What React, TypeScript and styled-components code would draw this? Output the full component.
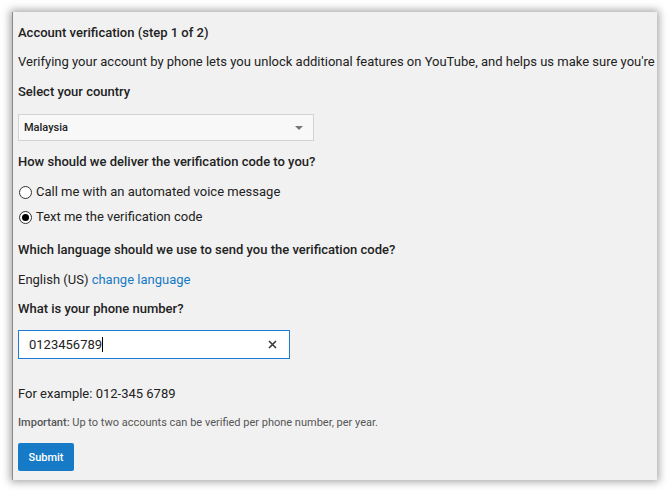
import React from "react";
import styled, { createGlobalStyle } from "styled-components";

const GlobalStyle = createGlobalStyle`
    html, body {
        margin: 0;
        padding: 0;
        background: #ffffff;
    }
    body {
        font-family: Roboto, "Liberation Sans", Arial, sans-serif;
    }
`;

export default function App() {
    return (
        <>
            <GlobalStyle />
            <Page>
                <Panel>
                    <Heading $mt={11}>Account verification (step 1 of 2)</Heading>
                    <Text $mt={9}>
                        Verifying your account by phone lets you unlock additional
                        features on YouTube, and helps us make sure you're a real
                        person.
                    </Text>
                    <Heading $mt={10}>Select your country</Heading>
                    <Select>
                        <span>Malaysia</span>
                        <Arrow />
                    </Select>
                    <Heading $mt={11}>
                        How should we deliver the verification code to you?
                    </Heading>
                    <RadioRow $mt={10}>
                        <Radio />
                        Call me with an automated voice message
                    </RadioRow>
                    <RadioRow $mt={5}>
                        <Radio $checked />
                        Text me the verification code
                    </RadioRow>
                    <Heading $mt={13}>
                        Which language should we use to send you the verification
                        code?
                    </Heading>
                    <Text $mt={10}>
                        English (US) <Link>change language</Link>
                    </Text>
                    <Heading $mt={9}>What is your phone number?</Heading>
                    <PhoneInput>
                        <span>0123456789</span>
                        <Caret />
                        <ClearButton>
                            <svg width="9" height="9" viewBox="0 0 9 9">
                                <path
                                    d="M1 1 L8 8 M8 1 L1 8"
                                    stroke="#3a3a3a"
                                    strokeWidth="1.6"
                                />
                            </svg>
                        </ClearButton>
                    </PhoneInput>
                    <Text $mt={25}>For example: 012-345 6789</Text>
                    <Note>
                        <b>Important:</b> Up to two accounts can be verified per
                        phone number, per year.
                    </Note>
                    <SubmitButton>Submit</SubmitButton>
                </Panel>
            </Page>
        </>
    );
}

const Page = styled.div`
    width: 669px;
    height: 491px;
    padding: 12px 12px 11px 12px;
    box-sizing: border-box;
    background: #ffffff;
`;

const Panel = styled.div`
    width: 645px;
    height: 468px;
    box-sizing: border-box;
    padding: 0 0 0 5px;
    background: #f1f1f1;
    border-left: 1px solid #8a8a8a;
    box-shadow: 0 0 8px 2px rgba(0, 0, 0, 0.35);
    overflow: hidden;
    display: flex;
    flex-direction: column;
    align-items: flex-start;
    color: #222;
`;

const Heading = styled.div<{ $mt: number }>`
    margin-top: ${({ $mt }) => $mt}px;
    font-size: 13px;
    font-weight: 500;
    line-height: 20px;
    color: #222;
    white-space: nowrap;
`;

const Text = styled.div<{ $mt: number }>`
    margin-top: ${({ $mt }) => $mt}px;
    font-size: 13px;
    line-height: 20px;
    color: #222;
    white-space: nowrap;
`;

const Link = styled.span`
    color: #167ac6;
`;

const Select = styled.div`
    margin-top: 12px;
    width: 296px;
    height: 27px;
    box-sizing: border-box;
    padding: 0 10px 0 5px;
    background: #f8f8f8;
    border: 1px solid #d3d3d3;
    display: flex;
    align-items: center;
    justify-content: space-between;
    font-size: 11px;
    font-weight: 500;
    color: #222;
`;

const Arrow = styled.span`
    width: 0;
    height: 0;
    border-left: 4px solid transparent;
    border-right: 4px solid transparent;
    border-top: 4px solid #767676;
`;

const RadioRow = styled.div<{ $mt: number }>`
    margin-top: ${({ $mt }) => $mt}px;
    display: flex;
    align-items: center;
    gap: 4px;
    font-size: 13px;
    line-height: 20px;
    color: #222;
    white-space: nowrap;
`;

const Radio = styled.span<{ $checked?: boolean }>`
    width: 13px;
    height: 13px;
    box-sizing: border-box;
    margin-left: 1px;
    border: 1px solid #333;
    border-radius: 50%;
    background: #fff;
    display: flex;
    align-items: center;
    justify-content: center;

    &::after {
        content: "";
        width: 7px;
        height: 7px;
        border-radius: 50%;
        background: ${({ $checked }) => ($checked ? "#000" : "transparent")};
    }
`;

const PhoneInput = styled.div`
    margin-top: 11px;
    width: 272px;
    height: 29px;
    box-sizing: border-box;
    padding: 0 12px 0 10px;
    background: #ffffff;
    border: 1px solid #1c7cd6;
    display: flex;
    align-items: center;
    font-size: 13px;
    color: #222;
`;

const Caret = styled.span`
    width: 1px;
    height: 15px;
    background: #000;
`;

const ClearButton = styled.span`
    margin-left: auto;
    display: flex;
    align-items: center;
`;

const Note = styled.div`
    margin-top: 11px;
    font-size: 11px;
    line-height: 16px;
    color: #555;
    white-space: nowrap;

    b {
        font-weight: 500;
    }
`;

const SubmitButton = styled.button`
    margin-top: 12px;
    width: 56px;
    height: 28px;
    padding: 0;
    border: none;
    border-radius: 2px;
    background: #167ac6;
    color: #ffffff;
    font-family: Roboto, "Liberation Sans", Arial, sans-serif;
    font-size: 11px;
    font-weight: 500;
`;
